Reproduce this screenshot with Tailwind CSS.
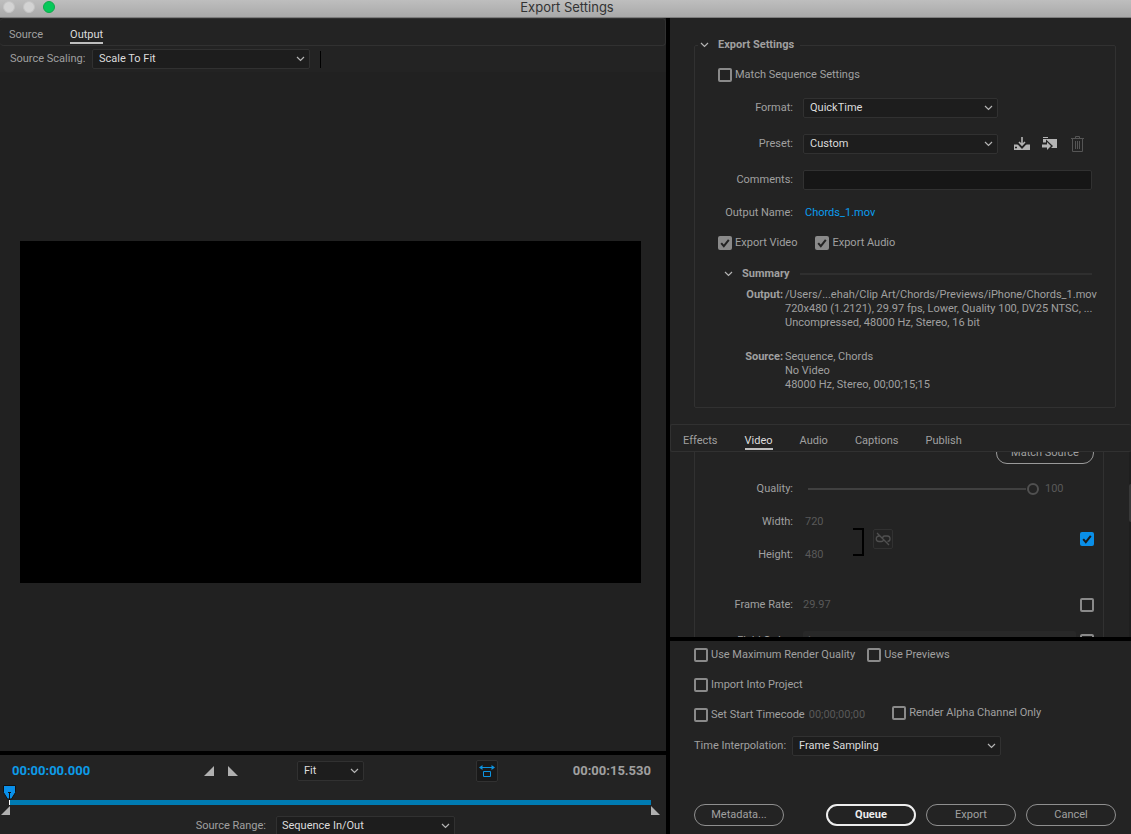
<!DOCTYPE html>
<html lang="en">
<head>
<meta charset="utf-8">
<meta name="viewport" content="width=device-width, initial-scale=1">
<title>Export Settings</title>
<script src="https://cdn.jsdelivr.net/npm/@tailwindcss/browser@4"></script>
</head>
<body class="flex h-screen flex-col overflow-hidden bg-[#232323] font-[Roboto,'Noto_Sans',sans-serif] text-[11px] leading-5 text-[#a0a0a0]">

<svg class="hidden" aria-hidden="true">
  <symbol id="chevron" viewBox="0 0 9 6"><path d="M1 1l3.5 3.5L8 1" fill="none" stroke="currentColor" stroke-width="1.2"/></symbol>
  <symbol id="check" viewBox="0 0 14 14"><path d="M3.2 7.2l2.6 3L10.800 3.800" fill="none" stroke="currentColor" stroke-width="2"/></symbol>
</svg>

<header class="flex h-[18px] shrink-0 items-center border-b border-[#7d7d7d] bg-linear-to-b from-[#bebebe] to-[#a9a9a9]">
  <div class="flex flex-1 gap-2 pl-[3px]">
    <button aria-label="Close" class="-mt-[3px] size-3 rounded-full border border-[#c4c4c4] bg-[#d3d3d3]"></button>
    <button aria-label="Minimize" class="-mt-[3px] size-3 rounded-full border border-[#c4c4c4] bg-[#d3d3d3]"></button>
    <button aria-label="Zoom" class="-mt-[3px] size-3 rounded-full border border-[#10a84a] bg-[#06c95a]"></button>
  </div>
  <h1 class="-mt-[3px] font-['Inter',sans-serif] text-[13px] leading-4 text-[#333]">Export Settings</h1>
  <div class="flex-1"></div>
</header>

<main class="flex min-h-0 flex-1">

  <section class="flex min-w-0 flex-1 flex-col">
    <nav class="flex h-7 shrink-0 gap-[27px] rounded-sm border border-l-0 border-[#313131] pl-[9px]">
      <button class="h-[25px] border-b-2 border-transparent pt-1.5">Source</button>
      <button class="h-[25px] border-b-2 border-[#bfbfbf] pt-1.5 text-[#dcdcdc]">Output</button>
    </nav>
    <div class="flex h-[26px] shrink-0 items-center pl-2.5">
      <label for="scaling" class="w-[82px]">Source Scaling:</label>
      <div class="grid w-[218px] items-center">
        <select id="scaling" class="col-start-1 row-start-1 h-5 appearance-none rounded-xs border border-[#313131] bg-[#1d1d1d] px-1.5 leading-4 text-[#dcdcdc]"><option>Scale To Fit</option></select>
        <svg class="pointer-events-none col-start-1 row-start-1 mr-[5px] h-1.5 w-[9px] justify-self-end text-[#b5b5b5]"><use href="#chevron"/></svg>
      </div>
      <div class="ml-2.5 h-[17px] w-px bg-black"></div>
    </div>
    <div class="flex min-h-0 flex-1 items-center bg-[#212121] pr-[25px] pl-5">
      <div class="aspect-[621/342] w-full bg-black"></div>
    </div>

    <div class="h-[83px] shrink-0 overflow-hidden border-t-4 border-black">
      <div class="flex h-8 items-center pr-[15px] pl-3">
        <span class="w-[192px] text-[13px] font-bold text-[#0d9be8]">00:00:00.000</span>
        <button aria-label="Set in point" class="w-6"><svg class="size-2.5" viewBox="0 0 10 10"><path d="M10 0v10H0z" fill="#b0b0b0"/></svg></button>
        <button aria-label="Set out point" class="w-[69px]"><svg class="size-2.5" viewBox="0 0 10 10"><path d="M0 0v10h10z" fill="#b0b0b0"/></svg></button>
        <div class="grid w-[67px] items-center">
          <select aria-label="Zoom level" class="col-start-1 row-start-1 h-5 appearance-none rounded-xs border border-[#313131] bg-[#1d1d1d] px-1.5 leading-4 text-[#dcdcdc]"><option>Fit</option></select>
          <svg class="pointer-events-none col-start-1 row-start-1 mr-[5px] h-1.5 w-[9px] justify-self-end text-[#b5b5b5]"><use href="#chevron"/></svg>
        </div>
        <button aria-label="Aspect ratio correction" class="ml-auto flex size-[22px] items-center justify-center rounded-xs border border-[#313131] bg-[#191919]">
          <svg class="h-3.5 w-4 shrink-0" viewBox="0 0 16 14"><path d="M0 3.500L3.500 1v5zM16 3.500L12.500 1v5z" fill="#0d93e0"/><path d="M2 3.500h12M4.500 7.500h7v5h-7z" fill="none" stroke="#0d93e0"/></svg>
        </button>
        <span class="ml-[75px] text-[13px] font-bold">00:00:15.530</span>
      </div>
      <div class="relative mr-[15px] ml-[9px] mt-[13px] h-[5px] bg-[#007bb2]">
        <svg class="absolute -top-[15px] -left-[6px] h-5 w-[13px]" viewBox="0 0 13 20"><path d="M.5.5h12v7l-4 6.500h-4l-4-6.500z" fill="#0a8fe8" stroke="#111"/><path d="M5 7.500h3M6.500 7v8" stroke="#111"/><path d="M6.500 15v5" stroke="#fff"/></svg>
        <svg class="absolute top-1.5 -left-2 size-[9px]" viewBox="0 0 9 9"><path d="M9 0v9H0z" fill="#b0b0b0"/></svg>
        <svg class="absolute top-1.5 left-full size-[9px]" viewBox="0 0 9 9"><path d="M0 0v9h9z" fill="#b0b0b0"/></svg>
      </div>
      <div class="mt-[11px] flex items-center">
        <label for="range" class="w-[276px] pr-2.5 text-right">Source Range:</label>
        <div class="grid w-[179px] items-center">
          <select id="range" class="col-start-1 row-start-1 h-5 appearance-none rounded-xs border border-[#313131] bg-[#1d1d1d] px-[5px] leading-4 text-[#dcdcdc]"><option>Sequence In/Out</option></select>
          <svg class="pointer-events-none col-start-1 row-start-1 mr-[5px] h-1.5 w-[9px] justify-self-end text-[#b5b5b5]"><use href="#chevron"/></svg>
        </div>
      </div>
    </div>
  </section>

  <section class="flex w-[465px] shrink-0 flex-col border-l-4 border-black">
    <fieldset class="mt-[17px] mr-[15px] ml-6 min-w-0 shrink-0 rounded-xs border border-[#313131] pr-[23px] pb-[15px] pl-[23px]">
      <legend class="-ml-5 flex items-center pr-1.5 pl-0.5 font-bold">
        <svg class="mr-[9px] h-1.5 w-[9px] text-[#b5b5b5]"><use href="#chevron"/></svg>Export Settings
      </legend>
      <label class="mt-2.5 flex items-center gap-[3px]"><input type="checkbox" class="size-3.5 appearance-none rounded-xs border-2 border-[#8a8a8a]">Match Sequence Settings</label>
      <div class="mt-[13px] flex items-center">
        <label for="format" class="w-[85px] pr-2.5 text-right">Format:</label>
        <div class="grid w-[195px] items-center">
          <select id="format" class="col-start-1 row-start-1 h-5 appearance-none rounded-xs border border-[#313131] bg-[#1d1d1d] px-1.5 leading-4 text-[#dcdcdc]"><option>QuickTime</option></select>
          <svg class="pointer-events-none col-start-1 row-start-1 mr-[5px] h-1.5 w-[9px] justify-self-end text-[#b5b5b5]"><use href="#chevron"/></svg>
        </div>
      </div>
      <div class="mt-4 flex items-center">
        <label for="preset" class="w-[85px] pr-2.5 text-right">Preset:</label>
        <div class="grid w-[195px] items-center">
          <select id="preset" class="col-start-1 row-start-1 h-5 appearance-none rounded-xs border border-[#313131] bg-[#1d1d1d] px-1.5 leading-4 text-[#dcdcdc]"><option>Custom</option></select>
          <svg class="pointer-events-none col-start-1 row-start-1 mr-[5px] h-1.5 w-[9px] justify-self-end text-[#b5b5b5]"><use href="#chevron"/></svg>
        </div>
        <button aria-label="Save preset" class="ml-4"><svg class="size-4" viewBox="0 0 16 16"><path d="M0 8.500h16v5.500H0z" fill="#b4b4b4"/><path d="M3 6l5 5.300L13 6" fill="none" stroke="#232323" stroke-width="2.500"/><path d="M8 1v8M5 6l3 3 3-3" fill="none" stroke="#b4b4b4" stroke-width="1.600"/><path d="M1 11.500h2" stroke="#232323" stroke-width="1.500"/></svg></button>
        <button aria-label="Import preset" class="ml-3"><svg class="size-4" viewBox="0 0 16 16"><path d="M1 1h5v1H1zM1 3h14v9H1z" fill="#b4b4b4"/><path d="M0 6.500h4V3.500l7 6.500-6 6v-3H0z" fill="#232323"/><path d="M0 8.500h5V6l4 4-4 4v-2.500H0z" fill="#b4b4b4"/></svg></button>
        <button aria-label="Delete preset" class="ml-3" disabled><svg class="size-4" viewBox="0 0 16 16"><path d="M1 2.500h13M5.500 2.500v-2h4v2M2.500 2.500v13h10v-13M5.500 5v8M7.500 5v8M9.500 5v8" fill="none" stroke="#555"/></svg></button>
      </div>
      <div class="mt-4 flex items-center">
        <label for="comments" class="w-[85px] pr-2.5 text-right">Comments:</label>
        <input id="comments" type="text" class="h-5 min-w-0 flex-1 rounded-xs border border-[#313131] bg-[#161616] px-1.5">
      </div>
      <div class="mt-[13px] flex items-center">
        <span class="w-[85px] pr-2.5 text-right">Output Name:</span>
        <a href="#" class="pl-0.5 text-[#0a9df0]">Chords_1.mov</a>
      </div>
      <div class="mt-2.5 flex items-center gap-[18px]">
        <label class="flex items-center gap-[3px]"><span class="grid text-[#232323]"><input type="checkbox" checked class="col-start-1 row-start-1 size-3.5 appearance-none rounded-xs bg-[#8a8a8a]"><svg class="pointer-events-none col-start-1 row-start-1 size-3.5"><use href="#check"/></svg></span>Export Video</label>
        <label class="flex items-center gap-[3px]"><span class="grid text-[#232323]"><input type="checkbox" checked class="col-start-1 row-start-1 size-3.5 appearance-none rounded-xs bg-[#8a8a8a]"><svg class="pointer-events-none col-start-1 row-start-1 size-3.5"><use href="#check"/></svg></span>Export Audio</label>
      </div>
      <div class="mt-[11px] flex items-center pl-1.5 font-bold">
        <svg class="mr-[9px] h-1.5 w-[9px] text-[#b5b5b5]"><use href="#chevron"/></svg>Summary
        <div class="ml-2.5 h-0.5 flex-1 bg-[#2f2f2f]"></div>
      </div>
      <dl class="mt-1 grid grid-cols-[65px_1fr] gap-x-0.5 gap-y-5 leading-[14px] whitespace-nowrap">
        <dt class="text-right font-bold">Output:</dt>
        <dd>/Users/...ehah/Clip Art/Chords/Previews/iPhone/Chords_1.mov<br>720x480 (1.2121), 29.97 fps, Lower, Quality 100, DV25 NTSC, ...<br>Uncompressed, 48000 Hz, Stereo, 16 bit</dd>
        <dt class="text-right font-bold">Source:</dt>
        <dd>Sequence, Chords<br>No Video<br>48000 Hz, Stereo, 00;00;15;15</dd>
      </dl>
    </fieldset>

    <nav class="mt-4 flex h-7 shrink-0 gap-[27px] rounded-xs border border-r-0 border-[#313131] pl-3">
      <button class="h-[25px] border-b-2 border-transparent pt-1.5">Effects</button>
      <button class="h-[25px] border-b-2 border-[#bfbfbf] pt-1.5 text-[#dcdcdc]">Video</button>
      <button class="h-[25px] border-b-2 border-transparent pt-1.5">Audio</button>
      <button class="h-[25px] border-b-2 border-transparent pt-1.5">Captions</button>
      <button class="h-[25px] border-b-2 border-transparent pt-1.5">Publish</button>
    </nav>

    <div class="flex min-h-0 flex-1 overflow-hidden">
      <div class="ml-6 flex-1 border-x border-[#313131] pr-[9px]">
        <div class="-mt-2.5 flex justify-end"><button class="h-[22px] w-[98px] rounded-full border border-[#9a9a9a] leading-4">Match Source</button></div>
        <div class="mt-[15px] flex items-center">
          <label for="quality" class="w-[108px] pr-2.5 text-right">Quality:</label>
          <input id="quality" type="range" min="0" max="100" value="100" disabled class="ml-[5px] h-3 w-[231px] appearance-none bg-transparent bg-[linear-gradient(#404040,#404040)] bg-[length:218px_2px] bg-left bg-no-repeat [&::-webkit-slider-thumb]:size-3 [&::-webkit-slider-thumb]:appearance-none [&::-webkit-slider-thumb]:rounded-full [&::-webkit-slider-thumb]:border-2 [&::-webkit-slider-thumb]:border-[#505050] [&::-webkit-slider-thumb]:bg-[#232323]">
          <output for="quality" class="ml-1.5 text-[#595959]">100</output>
        </div>
        <div class="mt-[13px] flex items-center">
          <div class="grid w-[158px] grid-cols-[108px_1fr] gap-y-[13px]">
            <span class="pr-2.5 text-right">Width:</span><span class="pl-0.5 text-[#595959]">720</span>
            <span class="pr-2.5 text-right">Height:</span><span class="pl-0.5 text-[#595959]">480</span>
          </div>
          <div class="mt-1.5 h-7 w-[11px] border-2 border-l-0 border-black"></div>
          <button aria-label="Link width and height" disabled class="ml-[9px] flex size-5 items-center justify-center rounded-xs border border-[#313131]">
            <svg class="size-4 shrink-0" viewBox="0 0 16 16"><path d="M5.500 5H4a2.700 2.700 0 0 0 0 5.500h2.500q1.500 0 2-1.500M7.500 7q.5-2 2-2H12a2.700 2.700 0 0 1 .5 5.500M2 2l12 12" fill="none" stroke="#505050" stroke-width="1.300"/></svg>
          </button>
          <span class="ml-auto grid text-[#1a1a1a]"><input type="checkbox" checked aria-label="Match source size" class="col-start-1 row-start-1 size-3.5 appearance-none rounded-xs bg-[#0a8fe8]"><svg class="pointer-events-none col-start-1 row-start-1 size-3.5"><use href="#check"/></svg></span>
        </div>
        <div class="mt-[30px] flex items-center">
          <span class="w-[108px] pr-2.5 text-right">Frame Rate:</span><span class="text-[#595959]">29.97</span>
          <input type="checkbox" aria-label="Match source frame rate" class="ml-auto size-3.5 appearance-none rounded-xs border-2 border-[#8a8a8a]">
        </div>
        <div class="mt-4 flex items-center">
          <label for="order" class="w-[108px] pr-2.5 text-right">Field Order:</label>
          <select id="order" disabled class="h-5 w-[273px] appearance-none rounded-xs bg-[#282828] px-[5px] leading-4 text-[#595959]"><option>Lower</option></select>
          <input type="checkbox" aria-label="Match source field order" class="ml-auto size-3.5 appearance-none rounded-xs border-2 border-[#8a8a8a]">
        </div>
      </div>
      <div class="w-[25px]"></div>
      <div class="w-0.5 bg-[#1e1e1e] pt-8"><div class="h-[38px] rounded-l-sm bg-[#383838]"></div></div>
    </div>

    <form class="flex h-[197px] shrink-0 flex-col border-t-4 border-black pt-1 pr-[15px] pb-2 pl-6">
      <div class="flex gap-3">
        <label class="flex items-center gap-[3px]"><input type="checkbox" class="size-3.5 appearance-none rounded-xs border-2 border-[#8a8a8a]">Use Maximum Render Quality</label>
        <label class="flex items-center gap-[3px]"><input type="checkbox" class="size-3.5 appearance-none rounded-xs border-2 border-[#8a8a8a]">Use Previews</label>
      </div>
      <label class="mt-2.5 flex items-center gap-[3px]"><input type="checkbox" class="size-3.5 appearance-none rounded-xs border-2 border-[#8a8a8a]">Import Into Project</label>
      <div class="mt-2 flex items-start">
        <label class="mt-0.5 flex items-center gap-[3px]"><input type="checkbox" class="size-3.5 appearance-none rounded-xs border-2 border-[#8a8a8a]">Set Start Timecode</label>
        <span class="mt-0.5 ml-1 text-[#595959]">00;00;00;00</span>
        <label class="ml-[27px] flex items-center gap-[3px]"><input type="checkbox" class="size-3.5 appearance-none rounded-xs border-2 border-[#8a8a8a]">Render Alpha Channel Only</label>
      </div>
      <div class="mt-[11px] flex items-center">
        <label for="interp" class="w-[98px] shrink-0 whitespace-nowrap">Time Interpolation:</label>
        <div class="grid w-[209px] items-center">
          <select id="interp" class="col-start-1 row-start-1 h-5 appearance-none rounded-xs border border-[#313131] bg-[#1d1d1d] px-1.5 leading-4 text-[#dcdcdc]"><option>Frame Sampling</option></select>
          <svg class="pointer-events-none col-start-1 row-start-1 mr-[5px] h-1.5 w-[9px] justify-self-end text-[#b5b5b5]"><use href="#chevron"/></svg>
        </div>
      </div>
      <div class="mt-auto flex gap-2.5">
        <button type="button" class="mr-auto h-[22px] w-[90px] rounded-full border border-[#8f8f8f] leading-4">Metadata...</button>
        <button type="button" class="h-[22px] w-[90px] rounded-full border-2 border-[#ededed] leading-4 font-bold text-[#ededed]">Queue</button>
        <button type="button" class="h-[22px] w-[90px] rounded-full border border-[#8f8f8f] leading-4">Export</button>
        <button type="button" class="h-[22px] w-[90px] rounded-full border border-[#8f8f8f] leading-4">Cancel</button>
      </div>
    </form>
  </section>
</main>
</body>
</html>
